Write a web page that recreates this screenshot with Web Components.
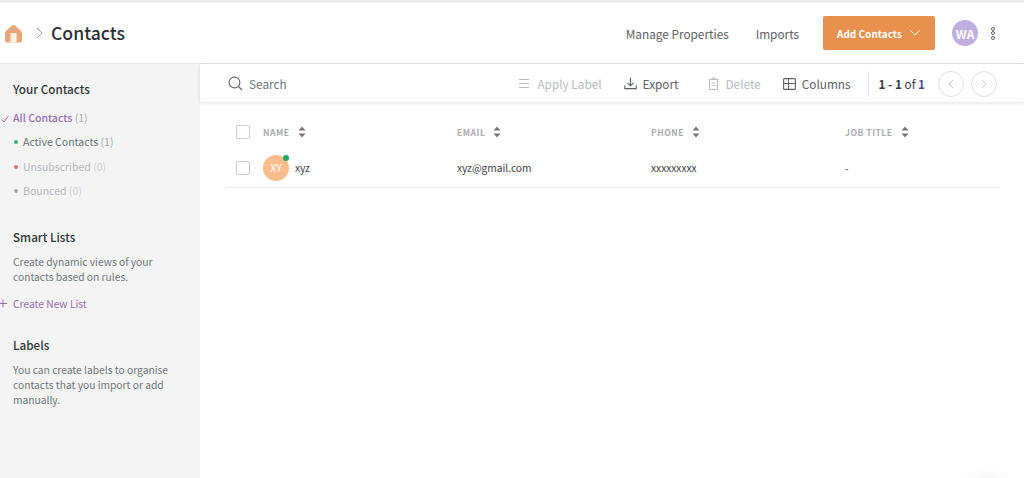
<!DOCTYPE html>
<html>
<head>
<meta charset="utf-8">
<title>Contacts</title>
<style>
  html, body { margin: 0; height: 100%; background: #fff; overflow: hidden; }
  body { font-family: "Noto Sans CJK SC", "Noto Sans", sans-serif; color: #2f3237; }
</style>
</head>
<body>
<contacts-app></contacts-app>
<script>
const ICONS = {
  home: '<svg width="17" height="19" viewBox="0 0 17 19"><path d="M8.5 .8 Q9.2 .8 10 1.5 L16 7 Q17 8 17 9 V16.5 A2 2 0 0 1 15 18.5 H2 A2 2 0 0 1 0 16.5 V9 Q0 8 1 7 L7 1.5 Q7.8 .8 8.5 .8 Z" fill="#e9a678"/><rect x="5.5" y="9" width="6" height="9.5" fill="#fdf0e4"/></svg>',
  crumb: '<svg width="7" height="12" viewBox="0 0 7 12"><path d="M1 1 L6 6 L1 11" fill="none" stroke="#9a9da3" stroke-width="1"/></svg>',
  chevron: '<svg width="10" height="6" viewBox="0 0 10 6"><path d="M.5 .5 L5 5 L9.5 .5" fill="none" stroke="#fff" stroke-width="1"/></svg>',
  search: '<svg width="15" height="15" viewBox="0 0 15 15"><circle cx="6.5" cy="6.5" r="5.4" fill="none" stroke="#62666c" stroke-width="1.1"/><path d="M10.5 10.5 L14 14" stroke="#62666c" stroke-width="1.1"/></svg>',
  label: '<svg width="10" height="11" viewBox="0 0 10 11"><path d="M0 1.5 H10 M0 5.5 H10 M0 9.5 H10" stroke="currentColor" stroke-width="1"/></svg>',
  exportIcon: '<svg width="13" height="13" viewBox="0 0 13 13"><path d="M6.5 .5 V8.5 M3.5 5.8 L6.5 8.7 L9.5 5.8 M.8 8.5 V11.6 H12.2 V8.5" fill="none" stroke="currentColor" stroke-width="1.1"/></svg>',
  trash: '<svg width="11" height="13" viewBox="0 0 11 13"><path d="M.5 2.5 H10.5 M4 2.5 V1 H7 V2.5 M1.5 2.5 V12.5 H9.5 V2.5 M3.5 6 H7.5 M3.5 8.5 H7.5" fill="none" stroke="currentColor" stroke-width="1"/></svg>',
  columns: '<svg width="13" height="12" viewBox="0 0 13 12"><rect x=".6" y=".6" width="11.8" height="10.8" rx="1" fill="none" stroke="currentColor" stroke-width="1.1"/><path d="M.6 5.5 H12.4 M5.5 .6 V11.4" stroke="currentColor" stroke-width="1.1"/></svg>',
  prev: '<svg width="6" height="10" viewBox="0 0 6 10"><path d="M5 1 L1 5 L5 9" fill="none" stroke="#c9cbcf" stroke-width="1"/></svg>',
  next: '<svg width="6" height="10" viewBox="0 0 6 10"><path d="M1 1 L5 5 L1 9" fill="none" stroke="#c9cbcf" stroke-width="1"/></svg>',
  sort: '<svg width="8" height="12" viewBox="0 0 8 12"><path d="M4 .5 L7.5 4.5 H.5 Z M4 11.5 L7.5 7.5 H.5 Z" fill="#76797f"/></svg>'
};

class ContactsHeader extends HTMLElement {
  constructor() {
    super();
    this.attachShadow({mode: 'open'}).innerHTML = `
      <style>
        :host { display: flex; align-items: center; box-sizing: border-box; border-top: 3px solid #ececee; border-bottom: 1px solid #e8e8ea; height: 64px; padding: 0 29px 0 5px; background: #fff; }
        .home { display: flex; }
        .crumb { display: flex; margin: 0 8px 0 14px; }
        h1 { margin: 0; font-size: 17.6px; line-height: 28px; font-weight: 500; color: #2c3036; }
        .links { margin-left: auto; display: flex; align-items: center; padding-top: 1px; font-size: 11.8px; line-height: 20px; color: #5e6268; }
        .links a:first-child { margin-right: 27px; }
        button { all: unset; box-sizing: border-box; margin-left: 24px; width: 112px; height: 34px; background: #e8914f; border-radius: 2px; color: #fff; font-size: 10px; font-weight: 700; display: flex; align-items: center; padding-left: 14px; gap: 8px; white-space: nowrap; }
        .avatar { margin-left: 17px; width: 26px; height: 26px; border-radius: 50%; background: #c0aee3; color: #fff; font-size: 12px; font-weight: 700; display: flex; align-items: center; justify-content: center; }
        .more { margin-left: 13px; display: flex; flex-direction: column; gap: .5px; }
        .more i { display: block; width: 4px; height: 4px; box-sizing: border-box; border: 1px solid #62666c; border-radius: 50%; }
      </style>
      <span class="home">${ICONS.home}</span>
      <span class="crumb">${ICONS.crumb}</span>
      <h1>Contacts</h1>
      <div class="links"><a>Manage Properties</a><a>Imports</a></div>
      <button>Add Contacts ${ICONS.chevron}</button>
      <div class="avatar">WA</div>
      <div class="more"><i></i><i></i><i></i></div>`;
  }
}

class SideItem extends HTMLElement {
  constructor() {
    super();
    this.attachShadow({mode: 'open'}).innerHTML = `
      <style>
        :host { display: block; position: relative; height: 24.5px; line-height: 24.5px; font-size: 10.5px; color: var(--c, #6b6e74); padding-left: var(--pad, 23px); white-space: nowrap; }
        :host([kind="all"]) { --c: #9a6db2; --pad: 13px; font-weight: 500; }
        :host([kind="off"]) { --c: #b6b8bc; }
        .dot { position: absolute; left: 14px; top: 10px; width: 4px; height: 4px; border-radius: 50%; background: var(--dot, transparent); }
        .count { color: var(--n, #a8abb0); font-weight: 400; }
        :host([kind="off"]) .count { color: #cfd1d4; }
      </style>
      <span class="dot"></span><slot name="mark"></slot><slot></slot> <span class="count"><slot name="count"></slot></span>`;
    const dot = this.getAttribute('dot');
    if (dot) this.shadowRoot.querySelector('.dot').style.background = dot;
  }
}

class SideSection extends HTMLElement {
  constructor() {
    super();
    this.attachShadow({mode: 'open'}).innerHTML = `
      <style>
        :host { display: block; }
        h2 { margin: 0 0 7px 13px; padding-top: 1px; font-size: 11.7px; line-height: 20px; font-weight: 500; color: #32353a; }
        .body { font-size: 10.25px; line-height: 15px; color: #73767c; }
      </style>
      <h2>${this.getAttribute('heading')}</h2>
      <div class="body"><slot></slot></div>`;
  }
}

class ContactsSidebar extends HTMLElement {
  constructor() {
    super();
    this.attachShadow({mode: 'open'}).innerHTML = `
      <style>
        :host { display: flex; flex-direction: column; width: 200px; flex: none; box-sizing: border-box; background: #f4f4f5; padding-top: 14px; }
        p { margin: 0 0 0 13px; width: 165px; }
        .new { margin: 12px 0 0 0; padding-left: 13px; position: relative; color: #9a6db2; line-height: 15px; }
        .new svg { position: absolute; left: -1px; top: 3px; }
        .items { margin-top: -.5px; }
        .smart { margin-top: 22.5px; }
        .labels { margin-top: 23px; }
      </style>
      <side-section heading="Your Contacts">
        <div class="items">
          <side-item kind="all"><svg slot="mark" width="8" height="8" viewBox="0 0 8 8" style="position:absolute;left:1px;top:9px"><path d="M.5 4.5 L3 7 L7.5 1" fill="none" stroke="#9a6db2" stroke-width="1"/></svg>All Contacts<span slot="count">(1)</span></side-item>
          <side-item dot="#2fb47c">Active Contacts<span slot="count">(1)</span></side-item>
          <side-item kind="off" dot="#ef6a6e">Unsubscribed<span slot="count">(0)</span></side-item>
          <side-item kind="off" dot="#a9abaf">Bounced<span slot="count">(0)</span></side-item>
        </div>
      </side-section>
      <side-section class="smart" heading="Smart Lists">
        <p>Create dynamic views of your contacts based on rules.</p>
        <div class="new"><svg width="8" height="9" viewBox="0 0 8 9"><path d="M0 4.5 H8 M4 .5 V8.5" stroke="#9a6db2" stroke-width="1"/></svg>Create New List</div>
      </side-section>
      <side-section class="labels" heading="Labels">
        <p>You can create labels to organise contacts that you import or add manually.</p>
      </side-section>`;
  }
}

class ToolButton extends HTMLElement {
  constructor() {
    super();
    this.attachShadow({mode: 'open'}).innerHTML = `
      <style>
        :host { display: inline-flex; align-items: center; gap: var(--gap, 7px); font-size: 11.8px; line-height: 20px; color: #5e6268; white-space: nowrap; }
        :host([disabled]) { color: #b9bbbf; }
        span { display: flex; }
      </style>
      <span>${ICONS[this.getAttribute('icon')]}</span><slot></slot>`;
  }
}

class ContactsToolbar extends HTMLElement {
  constructor() {
    super();
    this.attachShadow({mode: 'open'}).innerHTML = `
      <style>
        :host { display: flex; align-items: center; box-sizing: border-box; height: 38px; padding: 1px 27px 0 28px; background: #fff; box-shadow: 0 1px 4px rgba(0,0,0,.12); position: relative; font-size: 11.8px; }
        .search { display: flex; align-items: center; gap: 6px; color: #73767c; line-height: 20px; }
        .tools { margin-left: auto; display: flex; align-items: center; }
        .pages { display: flex; align-items: center; margin-left: 17px; padding-left: 10px; height: 26px; border-left: 1px solid #ececee; font-size: 11.7px; color: #3a3d42; white-space: nowrap; }
        .pages b { font-weight: 700; }
        .pages b.of { color: #5a4a8a; }
        .round { width: 26px; height: 26px; box-sizing: border-box; border: 1px solid #dcdde0; border-radius: 50%; display: flex; align-items: center; justify-content: center; margin-left: 7px; }
        .round:first-of-type { margin-left: 13px; }
      </style>
      <div class="search">${ICONS.search}<span>Search</span></div>
      <div class="tools">
        <tool-button icon="label" disabled style="--gap:8px">Apply Label</tool-button>
        <tool-button icon="exportIcon" style="margin-left:22px;--gap:6px">Export</tool-button>
        <tool-button icon="trash" disabled style="margin-left:29px">Delete</tool-button>
        <tool-button icon="columns" style="margin-left:22px;--gap:6px">Columns</tool-button>
      </div>
      <div class="pages"><span><b>1 - 1</b> of <b class="of">1</b></span><div class="round">${ICONS.prev}</div><div class="round">${ICONS.next}</div></div>`;
  }
}

class TickBox extends HTMLElement {
  constructor() {
    super();
    this.attachShadow({mode: 'open'}).innerHTML = `
      <style>:host { display: block; box-sizing: border-box; width: 14px; height: 14px; border: 1px solid #cfd0d3; border-radius: 1px; background: #fff; }</style>`;
  }
}

class ContactAvatar extends HTMLElement {
  constructor() {
    super();
    this.attachShadow({mode: 'open'}).innerHTML = `
      <style>
        :host { display: flex; position: relative; width: 26px; height: 26px; flex: none; border-radius: 50%; background: #fbbd8c; color: #fff; font-size: 10.5px; align-items: center; justify-content: center; }
        i { position: absolute; top: 0; right: 0; width: 6px; height: 6px; border-radius: 50%; background: #1fa866; }
      </style>
      <slot></slot><i></i>`;
  }
}

class ContactsTable extends HTMLElement {
  constructor() {
    super();
    const head = ['NAME', 'EMAIL', 'PHONE', 'JOB TITLE'].map(t =>
      `<div class="th"><span>${t}</span>${ICONS.sort}</div>`).join('');
    this.attachShadow({mode: 'open'}).innerHTML = `
      <style>
        :host { display: block; margin: 0 24px 0 26px; padding-top: 21px; }
        .row { display: grid; grid-template-columns: 27px 194px 194px 194px 1fr; align-items: center; padding-left: 10px; }
        .head { height: 18px; }
        .th { display: flex; align-items: center; gap: 8px; font-size: 8.5px; font-weight: 700; letter-spacing: .55px; line-height: 12px; color: #a9abaf; }
        .body { height: 39px; margin-top: 7px; border-bottom: 1px solid #ececee; font-size: 10.2px; color: #3f4247; }
        .name { display: flex; align-items: center; gap: 6px; }
      </style>
      <div class="row head"><tick-box></tick-box>${head}</div>
      <div class="row body">
        <tick-box></tick-box>
        <div class="name"><contact-avatar>XY</contact-avatar><span>xyz</span></div>
        <div>xyz@gmail.com</div>
        <div>xxxxxxxxx</div>
        <div>-</div>
      </div>`;
  }
}

class ContactsApp extends HTMLElement {
  constructor() {
    super();
    this.attachShadow({mode: 'open'}).innerHTML = `
      <style>
        :host { display: flex; flex-direction: column; position: relative; height: 478px; width: 1024px; overflow: hidden; }
        .main { display: flex; flex: 1; min-height: 0; }
        .content { flex: 1; min-width: 0; }
        .glow { position: absolute; left: 960px; top: 468px; width: 56px; height: 30px; border-radius: 50%; background: radial-gradient(closest-side, rgba(0,0,0,.05), rgba(0,0,0,0)); }
      </style>
      <contacts-header></contacts-header>
      <div class="main">
        <contacts-sidebar></contacts-sidebar>
        <div class="content">
          <contacts-toolbar></contacts-toolbar>
          <contacts-table></contacts-table>
        </div>
      </div>
      <div class="glow"></div>`;
  }
}

customElements.define('contacts-header', ContactsHeader);
customElements.define('side-item', SideItem);
customElements.define('side-section', SideSection);
customElements.define('contacts-sidebar', ContactsSidebar);
customElements.define('tool-button', ToolButton);
customElements.define('contacts-toolbar', ContactsToolbar);
customElements.define('tick-box', TickBox);
customElements.define('contact-avatar', ContactAvatar);
customElements.define('contacts-table', ContactsTable);
customElements.define('contacts-app', ContactsApp);
</script>
</body>
</html>
